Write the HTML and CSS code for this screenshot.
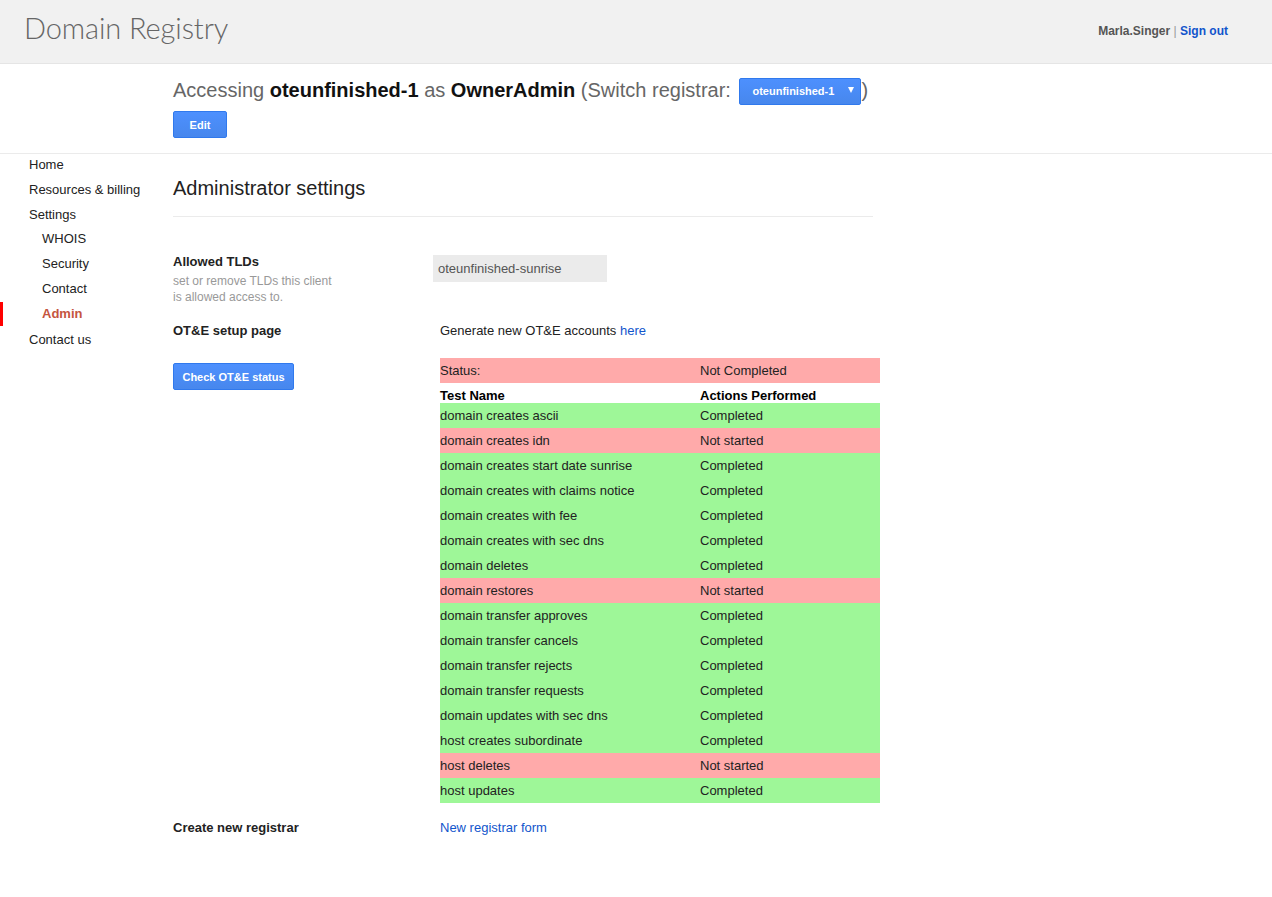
FILE: index.html
```html
<!DOCTYPE html>
<html>
<head>
<meta charset="utf-8">
<title>Domain Registry</title>
<link rel="stylesheet" href="styles.css">
</head>
<body>
<header class="top">
  <div class="logo">Domain Registry</div>
  <div class="user"><span class="uname">Marla.Singer</span> <span class="sep">|</span> <a class="signout" href="#">Sign out</a></div>
</header>
<section class="regbar">
  <div class="access">Accessing <b>oteunfinished-1</b> as <b>OwnerAdmin</b> (Switch registrar: <span class="btn dropdown">oteunfinished-1<span class="arrow"></span></span>)</div>
  <div><span class="btn edit">Edit</span></div>
</section>
<div class="page">
  <nav class="nav">
    <ul>
      <li>Home</li>
      <li>Resources &amp; billing</li>
      <li class="parent">Settings</li>
      <li class="sub">WHOIS</li>
      <li class="sub">Security</li>
      <li class="sub">Contact</li>
      <li class="sub active">Admin</li>
      <li>Contact us</li>
    </ul>
  </nav>
  <main class="main">
    <h1 class="title">Administrator settings</h1>
    <div class="rule"></div>
    <div class="row tlds">
      <div class="label">
        <div class="lt">Allowed TLDs</div>
        <div class="desc">set or remove TLDs this client<br>is allowed access to.</div>
      </div>
      <div class="value"><div class="input">oteunfinished-sunrise</div></div>
    </div>
    <div class="row setup">
      <div class="label">
        <div class="lt">OT&amp;E setup page</div>
        <span class="btn check">Check OT&amp;E status</span>
      </div>
      <div class="value pad">
        <div class="gen">Generate new OT&amp;E accounts <a href="#">here</a></div>
        <table class="status">
          <tr class="bad"><td>Status:</td><td>Not Completed</td></tr>
          <tr class="head"><th>Test Name</th><th>Actions Performed</th></tr>
          <tr class="ok"><td>domain creates ascii</td><td>Completed</td></tr>
          <tr class="bad"><td>domain creates idn</td><td>Not started</td></tr>
          <tr class="ok"><td>domain creates start date sunrise</td><td>Completed</td></tr>
          <tr class="ok"><td>domain creates with claims notice</td><td>Completed</td></tr>
          <tr class="ok"><td>domain creates with fee</td><td>Completed</td></tr>
          <tr class="ok"><td>domain creates with sec dns</td><td>Completed</td></tr>
          <tr class="ok"><td>domain deletes</td><td>Completed</td></tr>
          <tr class="bad"><td>domain restores</td><td>Not started</td></tr>
          <tr class="ok"><td>domain transfer approves</td><td>Completed</td></tr>
          <tr class="ok"><td>domain transfer cancels</td><td>Completed</td></tr>
          <tr class="ok"><td>domain transfer rejects</td><td>Completed</td></tr>
          <tr class="ok"><td>domain transfer requests</td><td>Completed</td></tr>
          <tr class="ok"><td>domain updates with sec dns</td><td>Completed</td></tr>
          <tr class="ok"><td>host creates subordinate</td><td>Completed</td></tr>
          <tr class="bad"><td>host deletes</td><td>Not started</td></tr>
          <tr class="ok"><td>host updates</td><td>Completed</td></tr>
        </table>
      </div>
    </div>
    <div class="row create">
      <div class="label"><div class="lt">Create new registrar</div></div>
      <div class="value pad"><a href="#">New registrar form</a></div>
    </div>
  </main>
</div>
</body>
</html>
```
FILE: styles.css
```css
html, body { margin: 0; padding: 0; background: #fff; }
body { font-family: Arial, "Liberation Sans", sans-serif; font-size: 13px; color: #222; }
a { color: #15c; text-decoration: none; }

.top {
  height: 63px;
  background: #f1f1f1;
  border-bottom: 1px solid #e5e5e5;
  display: flex;
  align-items: center;
  justify-content: space-between;
  padding: 0 44px 0 24px;
}
.logo {
  font-family: Lato, "Liberation Sans", sans-serif;
  font-weight: 300;
  font-size: 29px;
  color: #666;
  margin-top: -8px;
  letter-spacing: -0.1px;
}
.user { font-size: 12px; font-weight: bold; margin-top: -2px; }
.uname { color: #555; }
.sep { color: #999; font-weight: normal; }
.signout { color: #15c; }

.regbar {
  padding: 13px 0 15px 173px;
  border-bottom: 1px solid #ebebeb;
  height: 61px;
}
.access { font-size: 20px; color: #666; line-height: 27px; }
.access b { color: #111; }

.btn {
  display: inline-flex;
  align-items: center;
  justify-content: center;
  box-sizing: border-box;
  height: 27px;
  background: linear-gradient(#4d90fe, #4787ed);
  border: 1px solid #3079ed;
  border-radius: 2px;
  color: #fff;
  font-size: 11px;
  font-weight: bold;
  vertical-align: top;
}
.dropdown {
  width: 122px;
  padding: 0 0 0 12px;
  justify-content: flex-start;
  position: relative;
  margin: 1px 0 0 3px;
}
.dropdown .arrow {
  position: absolute;
  right: 6px;
  top: 8px;
  width: 0;
  height: 0;
  border-left: 3px solid transparent;
  border-right: 3px solid transparent;
  border-top: 6px solid #fff;
}
.edit { width: 54px; margin-top: 6px; }

.page { display: flex; }
.nav { width: 173px; flex: none; }
.nav ul { list-style: none; margin: 0; padding: 1px 0 0 0; }
.nav li {
  line-height: 20px;
  padding: 0 0 5px 29px;
  color: #222;
  position: relative;
}
.nav li.parent { padding-bottom: 4px; }
.nav li.sub { padding-left: 42px; }
.nav li.active { color: #c5553f; font-weight: bold; padding-bottom: 6px; }
.nav li.active::before {
  content: "";
  position: absolute;
  left: 0;
  top: -2px;
  width: 3px;
  height: 24px;
  background: #f00;
}

.main { width: 707px; }
.title {
  font-size: 20px;
  font-weight: normal;
  margin: 22px 0 0 0;
  line-height: 24px;
  color: #222;
}
.rule { width: 700px; border-top: 1px solid #ebebeb; margin-top: 16px; }

.row { display: flex; }
.label { width: 260px; flex: none; }
.lt { font-weight: bold; line-height: 16px; }
.desc { color: #999; font-size: 12px; line-height: 16px; margin-top: 3px; }
.value.pad { padding-left: 7px; }

.tlds { margin-top: 37px; }
.input {
  width: 174px;
  height: 27px;
  box-sizing: border-box;
  background: #ebebeb;
  color: #555;
  padding-left: 5px;
  line-height: 27px;
  margin-top: 1px;
}

.setup { margin-top: 18px; }
.check { width: 121px; margin-top: 24px; }
.gen { line-height: 16px; }
.status {
  border-collapse: collapse;
  width: 440px;
  margin-top: 19px;
}
.status td, .status th {
  padding: 0;
  text-align: left;
  height: 25px;
  line-height: 25px;
  color: #222;
}
.status td:first-child, .status th:first-child { width: 260px; }
.status tr.head th { height: 20px; line-height: 14px; vertical-align: bottom; color: #000; }
.status tr.bad { background: #ffaaaa; }
.status tr.ok { background: #9ef798; }

.create { margin-top: 17px; line-height: 16px; }
```
